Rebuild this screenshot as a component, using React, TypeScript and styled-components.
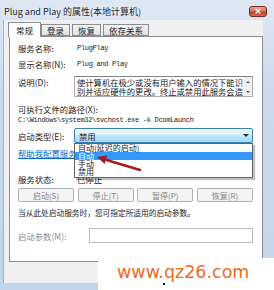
import styled, { createGlobalStyle } from "styled-components";

const GlobalStyle = createGlobalStyle`
  html, body { margin: 0; padding: 0; }
  body { width: 274px; height: 290px; overflow: hidden; background: #ffffff; }
`;

const cjk = `"Noto Sans CJK SC", "Noto Sans", sans-serif`;
const mono = `"Liberation Mono", "DejaVu Sans Mono", monospace`;

const Window = styled.div`
  position: relative;
  width: 274px;
  height: 290px;
  display: flex;
  flex-direction: column;
  background: linear-gradient(to bottom, #dde8f4 0%, #cbdbed 30%, #c2d5ea 100%);
  font-family: ${cjk};
  font-size: 8.4px;
  color: #1b1b1b;
  overflow: hidden;
`;

const TitleBar = styled.div`
  height: 20px;
  flex: none;
  display: flex;
  align-items: center;
  justify-content: space-between;
  padding: 2px 7px 0 4px;
  box-sizing: border-box;
`;

const Title = styled.span`
  font-size: 9px;
  color: #1e2633;
  white-space: nowrap;
  text-shadow: 0 0 4px #ffffff;
`;

const CloseButton = styled.div`
  width: 18px;
  height: 11px;
  border: 1px solid #7a2a1c;
  border-radius: 3px;
  box-sizing: border-box;
  background: linear-gradient(to bottom, #e8a493 0%, #d6745f 45%, #c2412a 55%, #d1694f 100%);
  color: #ffffff;
  font-family: "DejaVu Sans", sans-serif;
  font-size: 9px;
  font-weight: bold;
  line-height: 9px;
  text-align: center;
`;

const Client = styled.div`
  flex: 1;
  margin: 0 11px 7px 3px;
  padding: 2px 0 0 5px;
  background: #f0f0f0;
  display: flex;
  flex-direction: column;
  border-left: 1px solid #9fb3c9;
  box-sizing: border-box;
`;

const TabBar = styled.div`
  display: flex;
  align-items: flex-end;
  height: 14px;
  position: relative;
  z-index: 1;
`;

const Tab = styled.div<{ $active?: boolean }>`
  box-sizing: border-box;
  height: ${(p) => (p.$active ? 15 : 12)}px;
  margin: 0 ${(p) => (p.$active ? -1 : 1)}px ${(p) => (p.$active ? -1 : 0)}px
    ${(p) => (p.$active ? -1 : 1)}px;
  padding: 0 ${(p) => (p.$active ? 7 : 5)}px;
  border: 1px solid #898c95;
  border-bottom: ${(p) => (p.$active ? "none" : "1px solid #898c95")};
  background: ${(p) =>
    p.$active ? "#ffffff" : "linear-gradient(to bottom, #f3f3f3, #e2e2e2)"};
  display: flex;
  align-items: center;
  white-space: nowrap;
  font-size: 8.5px;
  position: relative;
  z-index: ${(p) => (p.$active ? 2 : 1)};
`;

const Panel = styled.div`
  width: 254px;
  height: 226px;
  box-sizing: border-box;
  border: 1px solid #898c95;
  background: #ffffff;
  padding: 0 8px;
  display: flex;
  flex-direction: column;
`;

const Row = styled.div<{ $mt: number; $h?: number; $top?: boolean }>`
  position: relative;
  display: flex;
  align-items: ${(p) => (p.$top ? "flex-start" : "center")};
  margin-top: ${(p) => p.$mt}px;
  height: ${(p) => p.$h ?? 12}px;
  flex: none;
`;

const Label = styled.span<{ $w?: number; $disabled?: boolean }>`
  width: ${(p) => p.$w ?? 56}px;
  flex: none;
  white-space: nowrap;
  line-height: 12px;
  color: ${(p) => (p.$disabled ? "#8d8d8d" : "#1b1b1b")};
`;

const MonoValue = styled.span`
  font-family: ${mono};
  font-size: 7px;
  letter-spacing: -0.3px;
  white-space: nowrap;
  padding-left: 3px;
`;

const TextValue = styled.span`
  padding-left: 3px;
  white-space: nowrap;
`;

const DescBox = styled.div`
  width: 179px;
  height: 21px;
  box-sizing: border-box;
  border: 1px solid #abadb3;
  border-top-color: #7f8287;
  display: flex;
`;

const DescText = styled.div`
  flex: 1;
  padding: 1px 1px 0 2px;
  line-height: 9px;
  font-size: 8.3px;
`;

const DescLine = styled.span`
  display: block;
  white-space: nowrap;
`;

const ScrollBar = styled.div`
  width: 8px;
  flex: none;
  background: #f0f0f0;
  display: flex;
  flex-direction: column;
  justify-content: space-between;
  align-items: center;
  padding: 4px 0 3px;
  box-sizing: border-box;
`;

const ScrollArrow = styled.div<{ $down?: boolean }>`
  width: 0;
  height: 0;
  border-left: 2px solid transparent;
  border-right: 2px solid transparent;
  ${(p) => (p.$down ? "border-top: 2px solid #555;" : "border-bottom: 2px solid #555;")}
`;

const PathLabel = styled.div<{ $mt: number }>`
  margin-top: ${(p) => p.$mt}px;
  height: 11px;
  line-height: 11px;
  white-space: nowrap;
`;

const PathValue = styled.div`
  height: 10px;
  line-height: 10px;
  font-family: ${mono};
  font-size: 7px;
  letter-spacing: -0.3px;
  white-space: nowrap;
`;

const Combo = styled.div`
  width: 179px;
  height: 15px;
  box-sizing: border-box;
  border: 1px solid #3c7fb1;
  border-radius: 2px;
  background: linear-gradient(to bottom, #eaf6fd 0%, #d9f0fc 45%, #bee6fd 50%, #a7d9f5 100%);
  display: flex;
  align-items: center;
  justify-content: space-between;
  padding: 0 3px 0 4px;
`;

const ComboArrow = styled.div`
  width: 0;
  height: 0;
  border-left: 3px solid transparent;
  border-right: 3px solid transparent;
  border-top: 3px solid #1e2f3f;
`;

const DropList = styled.div`
  position: absolute;
  left: 56px;
  top: 15px;
  width: 179px;
  box-sizing: border-box;
  border: 1px solid #646464;
  background: #ffffff;
  box-shadow: 2px 2px 1px rgba(0, 0, 0, 0.25);
  padding: 0 0 1px;
  z-index: 5;
`;

const DropItem = styled.div<{ $selected?: boolean }>`
  height: 8px;
  line-height: 8px;
  font-size: 8px;
  padding-left: 3px;
  white-space: nowrap;
  background: ${(p) => (p.$selected ? "#3399ff" : "transparent")};
  color: ${(p) => (p.$selected ? "#ffffff" : "#1b1b1b")};
`;

const HelpLink = styled.span`
  color: #0066cc;
  text-decoration: underline;
  white-space: nowrap;
`;

const ButtonRow = styled.div<{ $mt: number }>`
  display: flex;
  justify-content: space-between;
  width: 235px;
  height: 14px;
  margin-top: ${(p) => p.$mt}px;
  flex: none;
`;

const ActionButton = styled.div`
  width: 56px;
  height: 14px;
  box-sizing: border-box;
  border: 1px solid #adb2b5;
  border-radius: 2px;
  background: #f4f4f4;
  color: #838383;
  font-size: 8px;
  display: flex;
  align-items: center;
  justify-content: center;
  white-space: nowrap;
`;

const Hint = styled.div<{ $mt: number }>`
  margin-top: ${(p) => p.$mt}px;
  height: 12px;
  line-height: 12px;
  font-size: 7.7px;
  white-space: nowrap;
`;

const ParamInput = styled.div`
  width: 164px;
  height: 15px;
  box-sizing: border-box;
  border: 1px solid #b8bcc0;
  background: #ffffff;
`;

const Arrow = styled.svg`
  position: absolute;
  left: 92px;
  top: 150px;
  width: 52px;
  height: 26px;
  z-index: 10;
`;

const Watermark = styled.div`
  position: absolute;
  left: 98px;
  top: 258px;
  right: 0;
  bottom: 0;
  background: #ffffff;
  padding: 6px 0 0 19px;
  box-sizing: border-box;
  font-family: "DejaVu Sans", sans-serif;
  font-size: 17.5px;
  line-height: 17.5px;
  color: #f26b1d;
  white-space: nowrap;
  z-index: 10;

  &::after {
    content: "";
    position: absolute;
    left: 65px;
    top: 25px;
    width: 2px;
    height: 2px;
    background: #111111;
  }
`;

const buttons = ["启动(S)", "停止(T)", "暂停(P)", "恢复(R)"];
const startTypes = ["自动(延迟的启动)", "自动", "手动", "禁用"];

export default function App() {
  return (
    <>
      <GlobalStyle />
      <Window>
        <TitleBar>
          <Title>Plug and Play 的属性(本地计算机)</Title>
          <CloseButton>×</CloseButton>
        </TitleBar>
        <Client>
          <TabBar>
            <Tab $active>常规</Tab>
            <Tab>登录</Tab>
            <Tab>恢复</Tab>
            <Tab>依存关系</Tab>
          </TabBar>
          <Panel>
            <Row $mt={5}>
              <Label>服务名称:</Label>
              <MonoValue>PlugPlay</MonoValue>
            </Row>
            <Row $mt={4}>
              <Label>显示名称(N):</Label>
              <MonoValue>Plug and Play</MonoValue>
            </Row>
            <Row $mt={6} $h={21} $top>
              <Label>说明(D):</Label>
              <DescBox>
                <DescText>
                  <DescLine>使计算机在极少或没有用户输入的情况下能识</DescLine>
                  <DescLine>别并适应硬件的更改。终止或禁用此服务会造</DescLine>
                </DescText>
                <ScrollBar>
                  <ScrollArrow />
                  <ScrollArrow $down />
                </ScrollBar>
              </DescBox>
            </Row>
            <PathLabel $mt={7}>可执行文件的路径(X):</PathLabel>
            <PathValue>C:\Windows\system32\svchost.exe -k DcomLaunch</PathValue>
            <Row $mt={3} $h={15}>
              <Label>启动类型(E):</Label>
              <Combo>
                <span>禁用</span>
                <ComboArrow />
              </Combo>
              <DropList>
                {startTypes.map((t) => (
                  <DropItem key={t} $selected={t === "自动"}>
                    {t}
                  </DropItem>
                ))}
              </DropList>
            </Row>
            <Row $mt={4}>
              <HelpLink>帮助我配置服务启动选项。</HelpLink>
            </Row>
            <Row $mt={14}>
              <Label>服务状态:</Label>
              <TextValue>已停止</TextValue>
            </Row>
            <ButtonRow $mt={3}>
              {buttons.map((b) => (
                <ActionButton key={b}>{b}</ActionButton>
              ))}
            </ButtonRow>
            <Hint $mt={5}>当从此处启动服务时，您可指定所适用的启动参数。</Hint>
            <Row $mt={9} $h={15}>
              <Label $w={71} $disabled>
                启动参数(M):
              </Label>
              <ParamInput />
            </Row>
          </Panel>
        </Client>
        <Arrow viewBox="0 0 52 26">
          <line x1="48" y1="20" x2="12" y2="9.3" stroke="#a31d1d" strokeWidth="2.6" strokeLinecap="round" />
          <polygon points="5,7 15.2,5.2 12.6,14" fill="#a31d1d" />
        </Arrow>
        <Watermark>www.qz26.com</Watermark>
      </Window>
    </>
  );
}
